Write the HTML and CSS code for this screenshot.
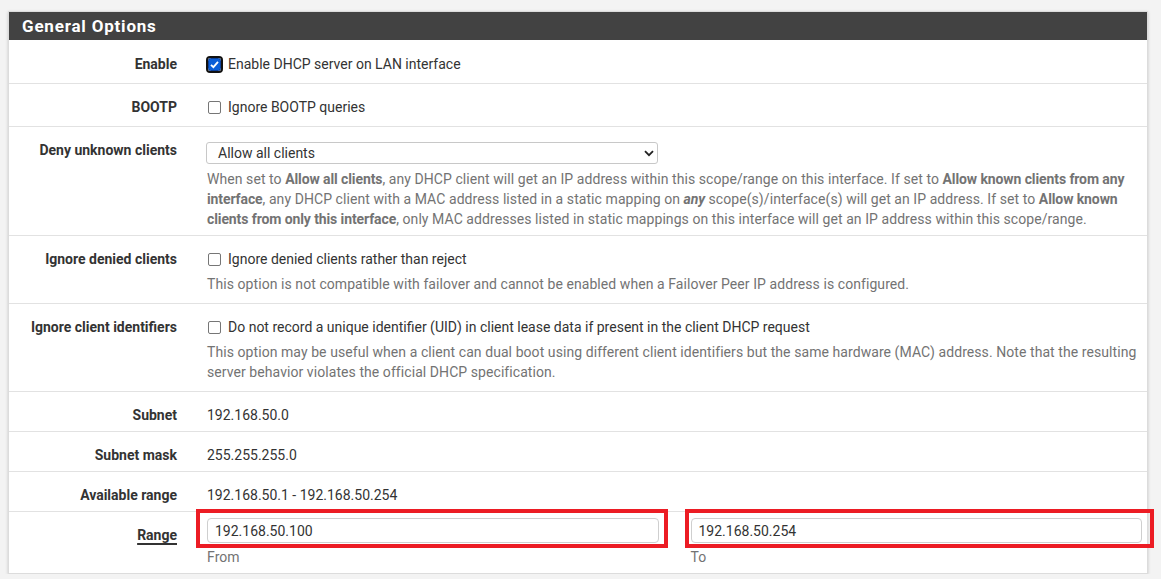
FILE: index.html
```html
<!DOCTYPE html>
<html>
<head>
<meta charset="utf-8">
<link rel="stylesheet" href="styles.css">
</head>
<body>
<div class="panel">
  <div class="panel-heading">General Options</div>
  <div class="row">
    <div class="lbl">Enable</div>
    <div class="content">
      <label class="check"><span class="cb cb-checked"><svg viewBox="0 0 13 13" width="13" height="13"><rect x="0.5" y="0.5" width="12" height="12" rx="2" fill="#0b5ed7" stroke="#0a3f99"/><path d="M3 6.8 L5.4 9.2 L10 3.8" fill="none" stroke="#fff" stroke-width="1.8"/></svg></span>Enable DHCP server on LAN interface</label>
    </div>
  </div>
  <div class="row">
    <div class="lbl">BOOTP</div>
    <div class="content">
      <label class="check"><span class="cb"></span>Ignore BOOTP queries</label>
    </div>
  </div>
  <div class="row row-deny">
    <div class="lbl">Deny unknown clients</div>
    <div class="content">
      <div class="select"><span>Allow all clients</span><svg width="10" height="7" viewBox="0 0 10 7"><path d="M1 1.2 L5 5.2 L9 1.2" fill="none" stroke="#222" stroke-width="1.8"/></svg></div>
      <div class="help">When set to <b>Allow all clients</b>, any DHCP client will get an IP address within this scope/range on this interface. If set to <b>Allow known clients from any interface</b>, any DHCP client with a MAC address listed in a static mapping on <b><i>any</i></b> scope(s)/interface(s) will get an IP address. If set to <b>Allow known clients from only this interface</b>, only MAC addresses listed in static mappings on this interface will get an IP address within this scope/range.</div>
    </div>
  </div>
  <div class="row">
    <div class="lbl">Ignore denied clients</div>
    <div class="content">
      <label class="check"><span class="cb"></span>Ignore denied clients rather than reject</label>
      <div class="help">This option is not compatible with failover and cannot be enabled when a Failover Peer IP address is configured.</div>
    </div>
  </div>
  <div class="row">
    <div class="lbl">Ignore client identifiers</div>
    <div class="content">
      <label class="check"><span class="cb"></span>Do not record a unique identifier (UID) in client lease data if present in the client DHCP request</label>
      <div class="help">This option may be useful when a client can dual boot using different client identifiers but the same hardware (MAC) address. Note that the resulting server behavior violates the official DHCP specification.</div>
    </div>
  </div>
  <div class="row row-static">
    <div class="lbl">Subnet</div>
    <div class="content value">192.168.50.0</div>
  </div>
  <div class="row row-static">
    <div class="lbl">Subnet mask</div>
    <div class="content value">255.255.255.0</div>
  </div>
  <div class="row row-static">
    <div class="lbl">Available range</div>
    <div class="content value">192.168.50.1 - 192.168.50.254</div>
  </div>
  <div class="row row-range">
    <div class="lbl"><span class="ul">Range</span></div>
    <div class="content range">
      <div class="range-col">
        <div class="mark mark-from"><input class="input" type="text" value="192.168.50.100"></div>
        <div class="help">From</div>
      </div>
      <div class="range-col">
        <div class="mark mark-to"><input class="input" type="text" value="192.168.50.254"></div>
        <div class="help">To</div>
      </div>
    </div>
  </div>
</div>
</body>
</html>
```

FILE: styles.css
```css
* { box-sizing: border-box; }
html, body { margin: 0; padding: 0; }
body {
  background: #f3f3f3;
  font-family: Roboto, "Liberation Sans", Arial, sans-serif;
  font-size: 14px;
  line-height: 20px;
  color: #212121;
  padding: 11px 0 0 8px;
}
.panel {
  width: 1140px;
  background: #fff;
  border: 1px solid #dcdcdc;
  box-shadow: 0 1px 3px rgba(0,0,0,0.18);
}
.panel-heading {
  background: #424242;
  color: #fff;
  font-weight: 700;
  font-size: 17px;
  letter-spacing: 0.8px;
  height: 28px;
  line-height: 29px;
  padding-left: 13px;
}
.row {
  display: flex;
  border-top: 1px solid #e2e2e2;
  padding: 13px 0 9px;
}
.panel-heading + .row { border-top: 0; padding-top: 14px; }
.row-deny { padding-bottom: 6px; }
.row-static { padding-bottom: 6px; }
.row-range { padding-bottom: 6px; }
.lbl {
  width: 168px;
  flex: none;
  text-align: right;
  font-weight: 700;
  color: #333;
  margin-right: 30px;
}
.ul {
  text-decoration: underline;
  text-decoration-thickness: 2px;
  text-underline-offset: 3px;
}
.content {
  width: 935px;
  flex: none;
}
.value { color: #333; }
.check {
  display: flex;
  align-items: center;
  color: #333;
}
.cb {
  width: 13px;
  height: 13px;
  border: 1px solid #767676;
  border-radius: 2px;
  margin: 1px 7px 0 1px;
  flex: none;
  display: flex;
}
.cb-checked {
  border: 0;
  outline: 2px solid #111;
  outline-offset: 0;
  border-radius: 2px;
}
.help {
  color: #737373;
  margin-top: 5px;
  letter-spacing: 0.07px;
}
.help b { letter-spacing: -0.1px; }
.select {
  margin-top: 2px;
  width: 452px;
  height: 22px;
  margin-left: -1px;
  border: 1px solid #c8c8c8;
  border-radius: 3px;
  display: flex;
  align-items: center;
  justify-content: space-between;
  padding: 0 3px 0 11px;
  color: #333;
}
.range {
  display: flex;
  gap: 32px;
  margin-top: -7px;
}
.range-col { flex: 1; }
.range-col .help { margin-top: 4px; }
.mark { position: relative; }
.mark::after {
  content: "";
  position: absolute;
  border: 4px solid #ec1c24;
  pointer-events: none;
}
.mark-from::after { left: -11px; right: -9px; top: -9px; bottom: -5px; }
.mark-to::after { left: -6px; right: -12px; top: -9px; bottom: -5px; }
.input {
  display: block;
  width: 100%;
  height: 25px;
  border: 1px solid #cfcfcf;
  border-radius: 4px;
  padding: 0 7px;
  font-family: Roboto, "Liberation Sans", Arial, sans-serif;
  font-size: 14px;
  color: #333;
  background: #fff;
}
```
